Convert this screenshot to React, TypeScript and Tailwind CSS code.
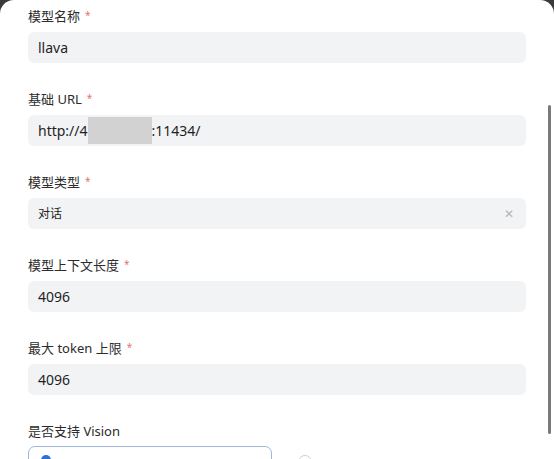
import React from "react";

const fields = [
  { label: "模型名称", value: "llava", required: true },
  { label: "基础 URL", value: "url", required: true },
  { label: "模型类型", value: "对话", required: true, select: true },
  { label: "模型上下文长度", value: "4096", required: true },
  { label: "最大 token 上限", value: "4096", required: true },
];

export default function App() {
  return (
    <div
      className="w-[554px] h-[459px] overflow-hidden bg-[#3a3a3a]"
      style={{ fontFamily: '"Noto Sans", "Noto Sans CJK SC", sans-serif' }}
    >
      <div className="relative h-full bg-white rounded-t-[14px] px-7 pt-[6px]">
        {fields.map((f) => (
          <div key={f.label} className="mb-[26px]">
            <div className="h-[22px] flex items-center text-[13px] text-[#2b2b2b] mb-[4px]">
              {f.label}
              {f.required && (
                <span className="ml-[5px] -mt-[4px] text-[#e57373] text-[10px]">*</span>
              )}
            </div>
            <div
              className={
                "h-[31px] rounded-[6px] flex items-center pl-[10px] pr-3 text-[#1f1f1f] " +
                (f.select ? "bg-[#f1f3f4] text-[12px]" : "bg-[#f2f3f5] text-[14px]")
              }
            >
              {f.value === "url" ? (
                <>
                  <span>http://4</span>
                  <span className="inline-block w-[64px] h-[27px] bg-[#d2d2d2]" />
                  <span>:11434/</span>
                </>
              ) : (
                <span>{f.value}</span>
              )}
              {f.select && <span className="ml-auto text-[12px] text-[#b5b5b5]">✕</span>}
            </div>
          </div>
        ))}
        <div className="h-[22px] flex items-center text-[13px] text-[#2b2b2b] mb-[3px]">
          是否支持 Vision
        </div>
        <div className="flex items-start gap-[26px]">
          <div className="w-[244px] h-[30px] rounded-[7px] border border-[#9db8d9] pl-[12px] pt-[8px]">
            <span className="block w-[10px] h-[10px] rounded-full bg-[#2f6fd6]" />
          </div>
          <div className="w-[14px] h-[14px] mt-[9px] rounded-full border border-[#cfcfcf]" />
        </div>
        <div className="absolute right-[3px] top-[105px] w-[3px] h-[329px] rounded-full bg-[#7a7a7a]" />
      </div>
    </div>
  );
}
